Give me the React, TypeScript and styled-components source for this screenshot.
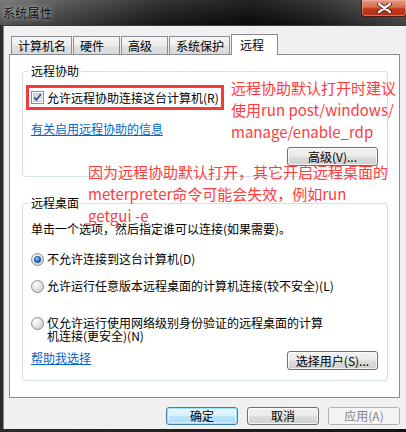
import React from 'react';
import styled, { createGlobalStyle, css } from 'styled-components';

const GlobalStyle = createGlobalStyle`
  html, body { margin: 0; padding: 0; background: #111; }
  body {
    font-family: "Noto Sans CJK SC", "Noto Sans", sans-serif;
    font-size: 12px;
    color: #000;
  }
  * { box-sizing: border-box; }
`;

const Window = styled.div`
  position: relative;
  width: 406px;
  height: 432px;
  display: flex;
  flex-direction: column;
  overflow: hidden;
  background: linear-gradient(90deg, #2b2b2b 0%, #141414 100%);
`;

const TitleBar = styled.div`
  height: 25px;
  flex: none;
  display: flex;
  align-items: flex-start;
  justify-content: space-between;
  padding-left: 3px;
  background:
    linear-gradient(180deg, rgba(255,255,255,0.10) 0%, rgba(0,0,0,0.25) 100%),
    linear-gradient(90deg, #6e6e6e 0%, #474747 18%, #1d1d1d 40%, #0b0b0b 62%, #202020 78%, #565656 100%);
`;

const Title = styled.span`
  font-size: 12px;
  line-height: 25px;
  color: #0a0a0a;
  letter-spacing: 0.3px;
  text-shadow: 0 0 6px rgba(255,255,255,0.55), 0 0 3px rgba(255,255,255,0.45);
`;

const CloseButton = styled.div`
  width: 46px;
  height: 17px;
  margin-right: -1px;
  border: 1px solid #4a1a10;
  border-top: none;
  border-radius: 0 0 4px 4px;
  display: flex;
  align-items: center;
  justify-content: center;
  background: linear-gradient(180deg, #e49a86 0%, #d76a4f 45%, #c2391b 55%, #b1301a 100%);
  box-shadow: inset 0 0 0 1px rgba(255, 200, 180, 0.45);
`;

const Body = styled.div`
  flex: 1;
  margin: 0 0 3px 3px;
  padding: 8px 6px 0;
  background: #f0f0f0;
  display: flex;
  flex-direction: column;
  border-top: 1px solid #3a3a3a;
  box-shadow: inset 1px 0 0 #8a8a8a;
`;

const TabStrip = styled.div`
  height: 20px;
  display: flex;
  align-items: flex-end;
  padding-left: 2px;
  position: relative;
  z-index: 1;
`;

const Tab = styled.div<{ $active?: boolean }>`
  min-width: 47px;
  height: 18px;
  padding: 0 5px 0 6px;
  border: 1px solid #898c95;
  border-bottom: none;
  line-height: 17px;
  white-space: nowrap;
  background: linear-gradient(180deg, #f5f5f5 0%, #ececec 50%, #e0e0e0 55%, #d9d9d9 100%);
  & + & { margin-left: 1px; }
  ${(p) =>
    p.$active &&
    css`
      height: 21px;
      margin: 0 -2px -1px -2px;
      padding-left: 8px;
      line-height: 19px;
      background: #fff;
      position: relative;
      z-index: 2;
    `}
`;

const Panel = styled.div`
  height: 344px;
  border: 1px solid #898c95;
  background: #fff;
  display: flex;
  flex-direction: column;
  padding: 0 11px 0 12px;
`;

const Group = styled.div<{ $top: number; $height: number }>`
  position: relative;
  margin-top: ${(p) => p.$top}px;
  height: ${(p) => p.$height}px;
  border: 1px solid #d5dfe5;
  border-radius: 3px;
  display: flex;
  flex-direction: column;
  padding: 0 9px 0 8px;
`;

const Legend = styled.span`
  position: absolute;
  top: -8px;
  left: 6px;
  padding: 0 2px;
  background: #fff;
  line-height: 14px;
`;

const Highlight = styled.div`
  align-self: flex-start;
  margin: 13px 0 0 -5px;
  height: 25px;
  border: 3px solid #f53a3a;
  padding: 0 2px 0 2px;
  display: flex;
  align-items: center;
  gap: 3px;
`;

const Label = styled.span`
  line-height: 14px;
  white-space: nowrap;
`;

const Link = styled.a<{ $top: number }>`
  display: block;
  margin-top: ${(p) => p.$top}px;
  line-height: 14px;
  color: #0066cc;
  text-decoration: underline;
  cursor: pointer;
  align-self: flex-start;
`;

const Text = styled.div<{ $top: number }>`
  margin-top: ${(p) => p.$top}px;
  line-height: 14px;
  white-space: nowrap;
`;

const Row = styled.div<{ $top: number; $justify?: string }>`
  margin-top: ${(p) => p.$top}px;
  display: flex;
  align-items: center;
  justify-content: ${(p) => p.$justify || 'flex-start'};
`;

const RadioRow = styled.div<{ $top: number }>`
  margin-top: ${(p) => p.$top}px;
  display: flex;
  align-items: flex-start;
  gap: 3px;
`;

const RadioLabel = styled.span<{ $wrap?: boolean }>`
  line-height: ${(p) => (p.$wrap ? 13 : 14)}px;
  ${(p) =>
    p.$wrap
      ? css`
          max-width: 282px;
        `
      : css`
          white-space: nowrap;
        `}
`;

const Button = styled.div<{ $variant?: 'default' | 'disabled'; $width: number }>`
  width: ${(p) => p.$width}px;
  height: 19px;
  border: 1px solid #707070;
  border-radius: 3px;
  display: flex;
  align-items: center;
  justify-content: center;
  line-height: 14px;
  white-space: nowrap;
  background: linear-gradient(180deg, #f2f2f2 0%, #ebebeb 48%, #dddddd 52%, #cfcfcf 100%);
  box-shadow: inset 0 0 0 1px rgba(255,255,255,0.75);
  ${(p) =>
    p.$variant === 'default' &&
    css`
      border-color: #3c7fb1;
      background: linear-gradient(180deg, #eaf6fd 0%, #d9f0fc 48%, #bee6fd 52%, #a7d9f5 100%);
      box-shadow: inset 0 0 0 1px #9fe4ff, inset 0 0 0 2px rgba(255,255,255,0.5);
    `}
  ${(p) =>
    p.$variant === 'disabled' &&
    css`
      border-color: #adb2b5;
      background: #f4f4f4;
      color: #838383;
      box-shadow: none;
    `}
`;

const ButtonRow = styled.div`
  margin-top: 9px;
  display: flex;
  justify-content: flex-end;
  gap: 9px;
  & > * { height: 18px; }
`;

const Note = styled.div<{ $top: number; $left: number }>`
  position: absolute;
  top: ${(p) => p.$top}px;
  left: ${(p) => p.$left}px;
  font-family: "Noto Sans CJK SC", "Noto Sans", sans-serif;
  font-size: 15px;
  line-height: 22px;
  color: #ff3b3b;
  white-space: nowrap;
  pointer-events: none;
  z-index: 5;
`;

const CheckBox = () => (
  <svg width="13" height="13" viewBox="0 0 13 13" style={{ flex: 'none' }}>
    <defs>
      <linearGradient id="cbg" x1="0" y1="0" x2="1" y2="1">
        <stop offset="0" stopColor="#cbcfd5" />
        <stop offset="1" stopColor="#f6f6f6" />
      </linearGradient>
    </defs>
    <rect x="0.5" y="0.5" width="12" height="12" fill="#fff" stroke="#8e8f8f" />
    <rect x="2.5" y="2.5" width="8" height="8" fill="url(#cbg)" stroke="#c9ccd2" />
    <path d="M3.2 6.4 L5.4 8.9 L9.8 3.2" fill="none" stroke="#3d4f8c" strokeWidth="1.7" />
  </svg>
);

const Radio = ({ checked }: { checked?: boolean }) => (
  <svg width="13" height="13" viewBox="0 0 13 13" style={{ flex: 'none', marginTop: 1 }}>
    <defs>
      <radialGradient id="rbg" cx="0.35" cy="0.3" r="0.8">
        <stop offset="0" stopColor="#ffffff" />
        <stop offset="1" stopColor="#c9cbce" />
      </radialGradient>
      <radialGradient id="rdot" cx="0.4" cy="0.35" r="0.7">
        <stop offset="0" stopColor="#9fd2ff" />
        <stop offset="0.5" stopColor="#2f7fd6" />
        <stop offset="1" stopColor="#174d8f" />
      </radialGradient>
    </defs>
    <circle cx="6.5" cy="6.5" r="6" fill="url(#rbg)" stroke="#8e8f8f" />
    {checked && <circle cx="6.5" cy="6.5" r="3.3" fill="url(#rdot)" stroke="#1b4f8a" strokeWidth="0.6" />}
  </svg>
);

const CloseX = () => (
  <svg width="15" height="10" viewBox="0 0 15 10">
    <path d="M2 1 L13 9 M13 1 L2 9" stroke="#3b1a10" strokeWidth="4" strokeLinecap="round" />
    <path d="M2 1 L13 9 M13 1 L2 9" stroke="#fff" strokeWidth="2.2" strokeLinecap="round" />
  </svg>
);

export default function App() {
  return (
    <>
      <GlobalStyle />
      <Window>
        <TitleBar>
          <Title>系统属性</Title>
          <CloseButton>
            <CloseX />
          </CloseButton>
        </TitleBar>
        <Body>
          <TabStrip>
            <Tab>计算机名</Tab>
            <Tab>硬件</Tab>
            <Tab>高级</Tab>
            <Tab>系统保护</Tab>
            <Tab $active>远程</Tab>
          </TabStrip>
          <Panel>
            <Group $top={16} $height={106}>
              <Legend>远程协助</Legend>
              <Highlight>
                <CheckBox />
                <Label>允许远程协助连接这台计算机(R)</Label>
              </Highlight>
              <Link $top={12}>有关启用远程协助的信息</Link>
              <Row $top={11} $justify="flex-end">
                <Button $width={91}>高级(V)...</Button>
              </Row>
            </Group>
            <Group $top={26} $height={178}>
              <Legend>远程桌面</Legend>
              <Text $top={18}>单击一个选项，然后指定谁可以连接(如果需要)。</Text>
              <RadioRow $top={16}>
                <Radio checked />
                <RadioLabel>不允许连接到这台计算机(D)</RadioLabel>
              </RadioRow>
              <RadioRow $top={13}>
                <Radio />
                <RadioLabel>允许运行任意版本远程桌面的计算机连接(较不安全)(L)</RadioLabel>
              </RadioRow>
              <RadioRow $top={23}>
                <Radio />
                <RadioLabel $wrap>仅允许运行使用网络级别身份验证的远程桌面的计算机连接(更安全)(N)</RadioLabel>
              </RadioRow>
              <Row $top={9} $justify="space-between">
                <Link $top={0}>帮助我选择</Link>
                <Button $width={91}>选择用户(S)...</Button>
              </Row>
            </Group>
          </Panel>
          <ButtonRow>
            <Button $width={72} $variant="default">确定</Button>
            <Button $width={72}>取消</Button>
            <Button $width={72} $variant="disabled">应用(A)</Button>
          </ButtonRow>
        </Body>
        <Note $top={77} $left={231}>
          远程协助默认打开时建议
          <br />
          使用run post/windows/
          <br />
          manage/enable_rdp
        </Note>
        <Note $top={161} $left={88}>
          因为远程协助默认打开，其它开启远程桌面的
          <br />
          meterpreter命令可能会失效，例如run
          <br />
          getgui -e
        </Note>
      </Window>
    </>
  );
}
